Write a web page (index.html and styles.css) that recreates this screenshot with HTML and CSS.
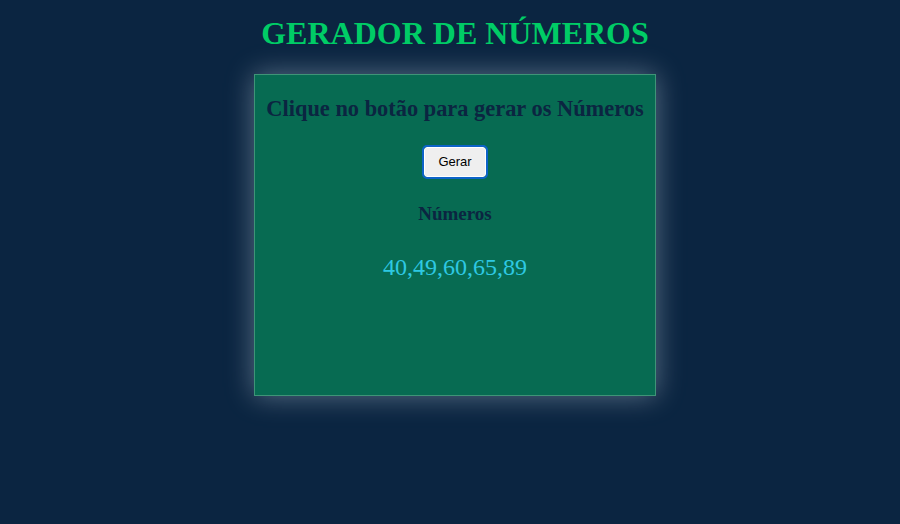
FILE: index.html
```html
<!DOCTYPE html>
<html lang="pt-BR">
<head>
<meta charset="utf-8">
<title>Gerador de Números</title>
<link rel="stylesheet" href="styles.css">
</head>
<body>
<div class="page">
  <h1 class="title">GERADOR DE NÚMEROS</h1>
  <main class="card">
    <h2 class="card-heading">Clique no botão para gerar os Números</h2>
    <div class="actions">
      <button class="btn" type="button">Gerar</button>
    </div>
    <h3 class="result-label">Números</h3>
    <p class="result">40,49,60,65,89</p>
  </main>
</div>
</body>
</html>
```

FILE: styles.css
```css
html, body {
  margin: 0;
  padding: 0;
}
body {
  background: #0b2541;
  font-family: "Liberation Serif", "Times New Roman", serif;
  width: 900px;
  height: 524px;
  overflow: hidden;
}
.page {
  padding-left: 10px;
}
.title {
  margin: 15px 0 0;
  font-size: 32px;
  line-height: 37px;
  font-weight: bold;
  color: #00cc66;
  text-align: center;
}
.card {
  width: 400px;
  height: 320px;
  margin: 22px auto 0;
  background: #076b52;
  border: 1px solid #3f9477;
  box-shadow: 0 0 26px rgba(210, 225, 238, 0.4);
  text-align: center;
  color: #0b2541;
  display: flex;
  flex-direction: column;
  align-items: center;
}
.card-heading {
  margin: 21px 0 0;
  font-size: 22.4px;
  line-height: 25.8px;
  font-weight: bold;
  white-space: nowrap;
}
.actions {
  margin-top: 25.2px;
  height: 30px;
}
.btn {
  width: 62px;
  height: 30px;
  padding: 0;
  font-family: "Liberation Sans", Arial, sans-serif;
  font-size: 13px;
  color: #000;
  background: #efefef;
  border: 1px solid #ffffff;
  border-radius: 3px;
  outline: 2px solid #0d63c8;
  outline-offset: 0;
}
.result-label {
  margin: 25.8px 0 0;
  font-size: 19px;
  line-height: 21.5px;
  font-weight: bold;
}
.result {
  margin: 29.5px 0 0;
  font-size: 24px;
  line-height: 27.6px;
  color: #2ec8e2;
}
```
